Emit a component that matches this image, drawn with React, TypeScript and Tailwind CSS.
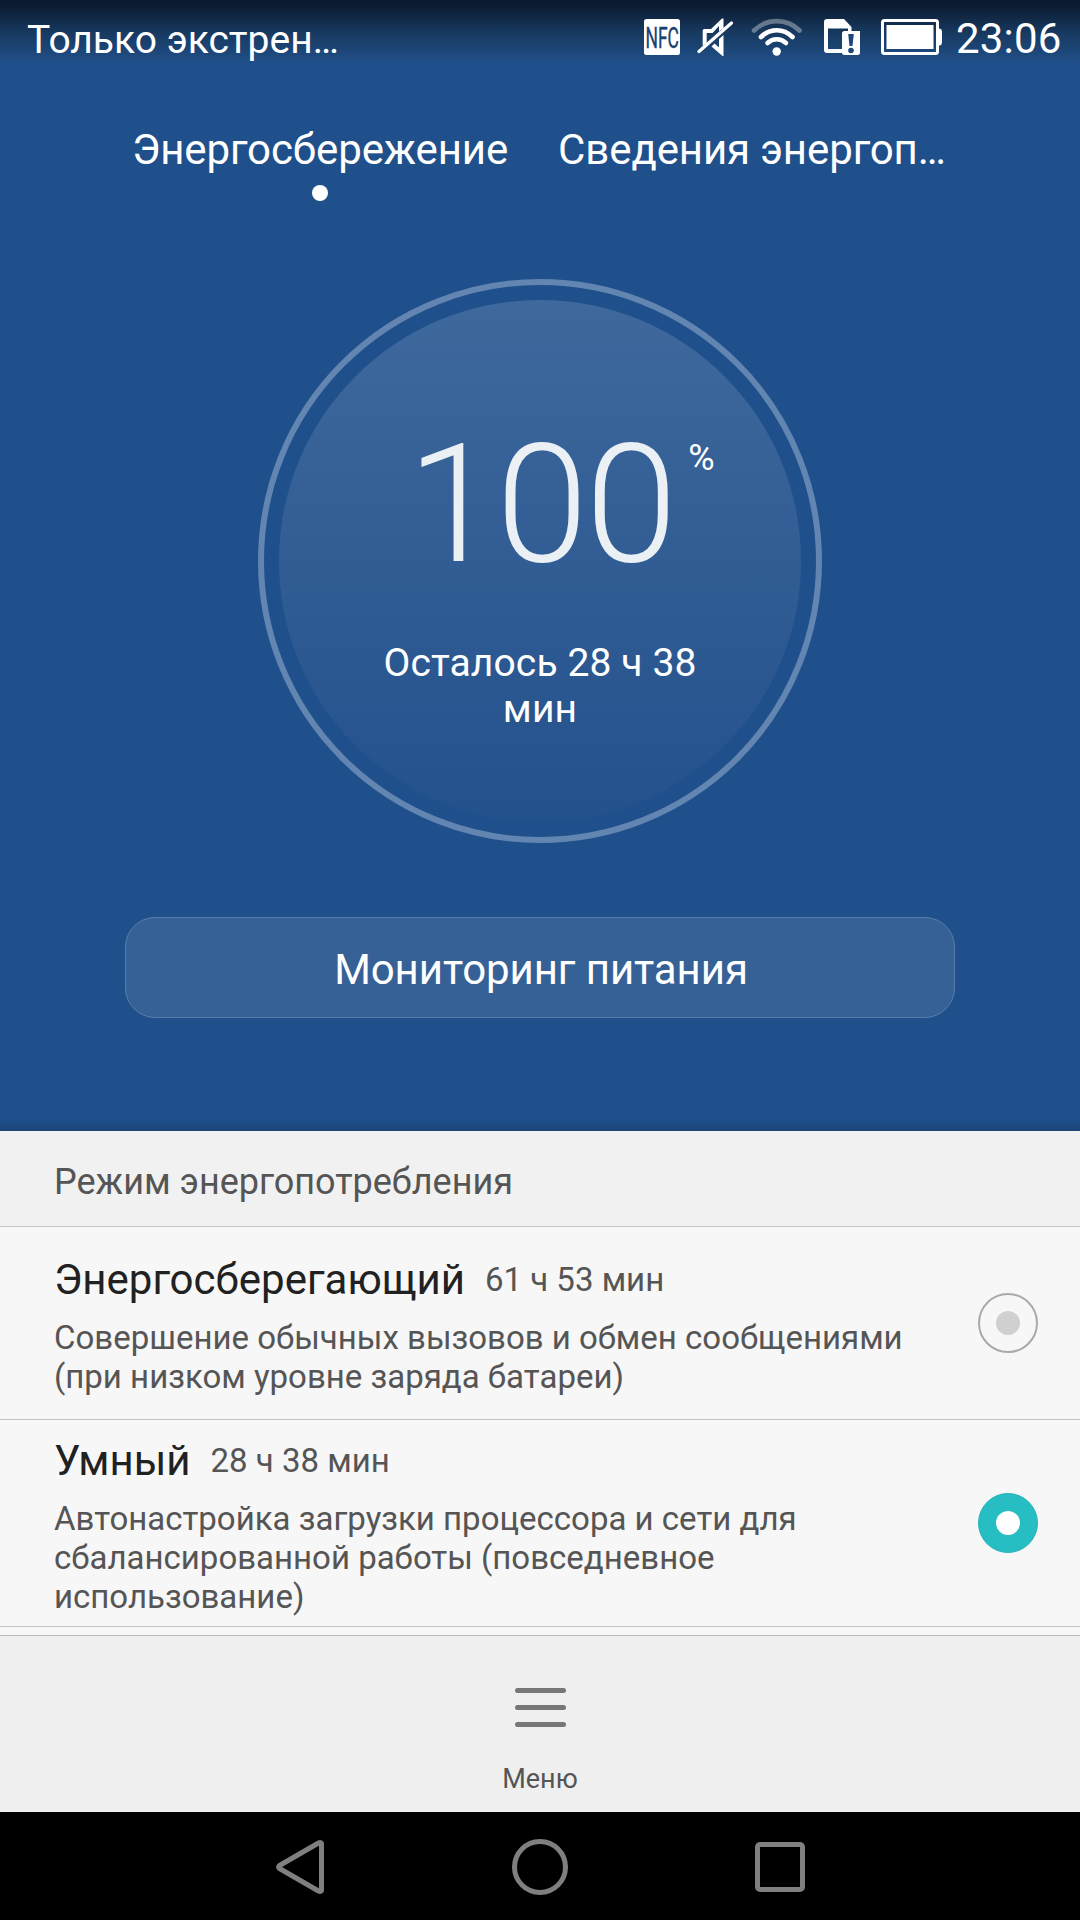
const NfcIcon = () => (
  <svg className="overflow-visible" width="36" height="36" viewBox="0 0 36 36">
    <rect width="36" height="36" rx="2.5" fill="#fff" />
    <text x="1.500" y="28.500" fontSize="29.5" textLength="33.5" lengthAdjust="spacingAndGlyphs" fill="#1b4170" stroke="#1b4170" strokeWidth="0.4">NFC</text>
  </svg>
);

const MuteIcon = () => (
  <svg width="38" height="38" viewBox="0 0 38 38" fill="#fff">
    <path d="M5.700 28V12.500Q5.700 11 7.200 11H14L25 0.500H26.500V10L22 13.500V8L15.500 15H9.700V25Z" />
    <path d="M26.500 17V38H25.500L14.500 28.500L17.500 25.500L22 29.500V21Z" />
    <path d="M2 33.500L34.500 5" stroke="#fff" strokeWidth="3.2" strokeLinecap="round" />
  </svg>
);

const WifiIcon = () => (
  <svg width="52" height="38" viewBox="0 0 52 38" fill="none" stroke="#fff" strokeWidth="4.6" strokeLinecap="round">
    <path d="M3 12.500C16 0 36 0 48.500 12.500" opacity="0.35" />
    <path d="M10 19C19 10 32.500 10 41.500 19" />
    <path d="M16.500 25C22 20 29.500 20 35 25" />
    <circle cx="25.700" cy="33.500" r="4.200" fill="#fff" stroke="none" />
  </svg>
);

const SimIcon = () => (
  <svg width="36" height="36" viewBox="0 0 36 36">
    <path d="M3 0H20L27.500 8V12H36V33.500Q36 36 33.500 36H20.500Q18 36 18 34H3Q0 34 0 31V3Q0 0 3 0ZM4 9.500V30H18V14.500Q18 12 20.500 12H24V9.500Z" fill="#fff" fillRule="evenodd" />
    <path d="M24.200 15H29.800L28.500 27H25.500Z" fill="#1d467a" />
    <circle cx="27" cy="31.500" r="2.800" fill="#1d467a" />
  </svg>
);

const BatteryIcon = () => (
  <svg width="61" height="36" viewBox="0 0 61 36">
    <rect x="1.500" y="1.500" width="55" height="33" rx="2" fill="none" stroke="#fff" strokeWidth="3" />
    <rect x="5.500" y="6" width="47" height="24" fill="#fff" />
    <path d="M57 9.500H58.500Q61 10 61 12.500V23.500Q61 26 58.500 26.500H57Z" fill="#fff" />
  </svg>
);

const StatusBar = () => (
  <div className="flex h-20 items-center bg-linear-to-b from-[#0b1a2e] from-5% via-[#17395f] via-40% to-[#20508b] to-80% pl-[27px]">
    <span className="w-[617px] text-[39px] leading-[79px]">Только экстрен…</span>
    <div className="-mt-1.5 flex items-center">
      <NfcIcon />
      <div className="ml-[17px]"><MuteIcon /></div>
      <div className="ml-[16px]"><WifiIcon /></div>
      <div className="ml-[21px]"><SimIcon /></div>
      <div className="ml-[21px]"><BatteryIcon /></div>
    </div>
    <span className="-mt-[3px] ml-[14px] text-[42px] leading-[60px] tracking-[0.2px]">23:06</span>
  </div>
);

const Tabs = () => (
  <div className="mt-10 flex gap-[50px] pl-[132px] text-[42px] leading-[60px] tracking-[-0.1px] whitespace-nowrap">
    <div className="flex flex-col items-center">
      <span>Энергосбережение</span>
      <span className="mt-[5px] size-4 rounded-full bg-white" />
    </div>
    <span>Сведения энергоп…</span>
  </div>
);

const Gauge = () => (
  <div className="mx-auto mt-[78px] size-[564px] rounded-full border-[6px] border-[#6285b1] p-[15px]">
    <div className="size-[522px] rounded-full bg-linear-to-b from-[#3f699d] to-[#23518c] pt-[122px]">
      <div className="flex pl-[128px] whitespace-nowrap">
        <span className="text-[166px] leading-[166px] font-light tracking-[-3px] text-[#ebf0f5]">100</span>
        <span className="mt-[15px] ml-[14px] text-[36px] leading-[42px]">%</span>
      </div>
      <p className="mx-auto mt-[52px] w-[340px] text-center text-[39px] leading-[46px] tracking-[0.12px]">Осталось 28 ч 38 мин</p>
    </div>
  </div>
);

const Radio = ({ checked }: { checked?: boolean }) =>
  checked ? (
    <span className="flex size-[60px] items-center justify-center rounded-full border border-[#26b2b6] bg-[#27bec3]">
      <span className="size-6 rounded-full bg-white" />
    </span>
  ) : (
    <span className="flex size-[60px] items-center justify-center rounded-full border-2 border-[#a9a9a9]">
      <span className="size-6 rounded-full bg-[#d0d0d0]" />
    </span>
  );

const modes = [
  {
    title: 'Энергосберегающий',
    time: '61 ч 53 мин',
    lines: ['Совершение обычных вызовов и обмен сообщениями', '(при низком уровне заряда батареи)'],
    checked: false,
    row: 'h-[193px] pt-[22px]',
  },
  {
    title: 'Умный',
    time: '28 ч 38 мин',
    lines: ['Автонастройка загрузки процессора и сети для', 'сбалансированной работы (повседневное', 'использование)'],
    checked: true,
    row: 'h-[207px] pt-[10px]',
  },
];

const ModeList = () => (
  <div className="h-[504px] bg-[#f7f7f7] text-[#555]">
    <div className="h-[96px] border-b border-[#c3c3c3] bg-[#f1f1f1] pl-[54px] text-[36px] leading-[102px]">Режим энергопотребления</div>
    {modes.map((m) => (
      <div key={m.title} className={`flex justify-between border-b border-[#c3c3c3] pr-[42px] pl-[54px] ${m.row}`}>
        <div className="whitespace-nowrap">
          <div className="flex h-[69px] gap-5">
            <span className="text-[42px] leading-[62px] text-[#212121]">{m.title}</span>
            <span className="text-[33px] leading-[62px]">{m.time}</span>
          </div>
          <div className="text-[33px] leading-[39px]">
            {m.lines.map((line) => (
              <p key={line}>{line}</p>
            ))}
          </div>
        </div>
        <div className={m.checked ? 'pt-[63px]' : 'pt-[44px]'}>
          <Radio checked={m.checked} />
        </div>
      </div>
    ))}
  </div>
);

const MenuBar = () => (
  <div className="flex h-[177px] flex-col items-center border-t border-[#b8b8b8] bg-[#efefef] pt-[52px] text-[#555]">
    <div className="flex flex-col gap-3">
      <span className="h-[5px] w-[51px] rounded-full bg-[#777]" />
      <span className="h-[5px] w-[51px] rounded-full bg-[#777]" />
      <span className="h-[5px] w-[51px] rounded-full bg-[#777]" />
    </div>
    <span className="mt-[36px] text-[27px] leading-[32px]">Меню</span>
  </div>
);

const NavBar = () => (
  <div className="flex h-[108px] items-center bg-black pt-0.5">
    <svg className="ml-[276px]" width="48" height="54" viewBox="0 0 48 54" fill="none" stroke="#7f7f7f" strokeWidth="5" strokeLinejoin="round">
      <path d="M45.500 3.500V50.500Q44.500 52 42.500 51L3.500 28.500Q2 27 3.500 25.500L42.500 3Q44.500 2 45.500 3.500Z" />
    </svg>
    <span className="ml-[188px] size-14 rounded-full border-5 border-[#7f7f7f]" />
    <span className="ml-[187px] size-[50px] rounded-[5px] border-5 border-[#7f7f7f]" />
  </div>
);

const App = () => (
  <div className="h-[1920px] w-[1080px] overflow-hidden font-[Roboto,sans-serif]">
    <div className="flex h-[1131px] flex-col bg-[#20508b] text-white">
      <StatusBar />
      <Tabs />
      <Gauge />
      <button className="mx-auto mt-[74px] h-[101px] w-[830px] rounded-[30px] border border-[#587dab] bg-[#366197] pt-[4px] pl-0.5 text-[42px] tracking-[-0.08px]">Мониторинг питания</button>
      {/* Shadow over the list */}
      <div className="mt-auto h-3 bg-linear-to-b from-[#20508b] to-[#1c4479]" />
    </div>
    <ModeList />
    <MenuBar />
    <NavBar />
  </div>
);

export default App;
